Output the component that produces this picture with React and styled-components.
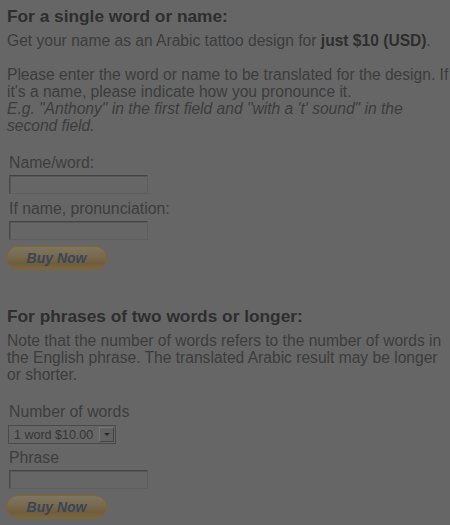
import styled, { createGlobalStyle } from "styled-components";

const GlobalStyle = createGlobalStyle`
  html, body {
    margin: 0;
    padding: 0;
    background: #666666;
  }
  body {
    font-family: "Liberation Sans", Arial, sans-serif;
    color: #3c3c3c;
  }
`;

const Page = styled.div`
  padding: 6px 0 0 7px;
  width: 443px;
`;

const Section = styled.section`
  margin-bottom: ${(p) => p.gap || 0}px;
`;

const Heading = styled.h2`
  margin: 0 0 6px 0;
  font-size: 17.3px;
  font-weight: bold;
  color: #2e2e2e;
  line-height: 20px;
`;

const Text = styled.p`
  margin: 0 0 17px 0;
  font-size: 15.6px;
  line-height: 17px;

  strong {
    color: #2e2e2e;
  }

  em {
    display: block;
  }
`;

const Form = styled.form`
  display: flex;
  flex-direction: column;
  align-items: flex-start;
  padding-left: 2px;
  margin-top: 20px;
`;

const Label = styled.label`
  font-size: 15.8px;
  line-height: 18px;
  margin: 0 0 3px 0;
  color: #3d3d3d;
`;

const Field = styled.input`
  box-sizing: border-box;
  width: 139px;
  height: 19px;
  margin: 0 0 6px 0;
  background: #666666;
  border: 1px solid #5e5e5e;
  border-top-color: #444444;
  border-left-color: #4a4a4a;
  box-shadow: inset 1px 1px 0 #585858;
  padding: 0;
`;

const Select = styled.div`
  box-sizing: border-box;
  display: flex;
  align-items: center;
  justify-content: space-between;
  width: 108px;
  height: 19px;
  margin: 1px 0 5px -1px;
  border: 1px solid #4a4a4a;
  background: #666666;
  font-size: 12.5px;
  color: #353535;
  padding-left: 5px;
`;

const Arrow = styled.span`
  box-sizing: border-box;
  width: 15px;
  height: 15px;
  margin-right: 1px;
  background: #626262;
  border: 1px solid #444;
  border-top-color: #777;
  border-left-color: #777;
  display: flex;
  align-items: center;
  justify-content: center;

  &::after {
    content: "";
    border-left: 3px solid transparent;
    border-right: 3px solid transparent;
    border-top: 3px solid #2a2a2a;
  }
`;

const BuyButton = styled.button`
  box-sizing: border-box;
  width: 101px;
  height: 24px;
  margin-left: -3px;
  border-radius: 12px;
  border: 1px solid #806432;
  background: linear-gradient(
    to bottom,
    #7e7562 0%,
    #77694c 45%,
    #6f5e3c 75%,
    #7a6642 100%
  );
  color: #38455a;
  font-family: "Liberation Sans", Arial, sans-serif;
  font-size: 14px;
  font-weight: bold;
  font-style: italic;
  padding: 0;
  text-align: center;
`;

export default function App() {
  return (
    <>
      <GlobalStyle />
      <Page>
        <Section gap={36}>
          <Heading>For a single word or name:</Heading>
          <Text>
            Get your name as an Arabic tattoo design for{" "}
            <strong>just $10 (USD)</strong>.
          </Text>
          <Text>
            Please enter the word or name to be translated for the design. If
            it's a name, please indicate how you pronounce it.
            <em>
              E.g. "Anthony" in the first field and "with a 't' sound" in the
              second field.
            </em>
          </Text>
          <Form>
            <Label>Name/word:</Label>
            <Field type="text" />
            <Label>If name, pronunciation:</Label>
            <Field type="text" />
            <BuyButton type="button">Buy Now</BuyButton>
          </Form>
        </Section>
        <Section>
          <Heading>For phrases of two words or longer:</Heading>
          <Text>
            Note that the number of words refers to the number of words in the
            English phrase. The translated Arabic result may be longer or
            shorter.
          </Text>
          <Form>
            <Label>Number of words</Label>
            <Select>
              1 word $10.00
              <Arrow />
            </Select>
            <Label>Phrase</Label>
            <Field type="text" />
            <BuyButton type="button">Buy Now</BuyButton>
          </Form>
        </Section>
      </Page>
    </>
  );
}
